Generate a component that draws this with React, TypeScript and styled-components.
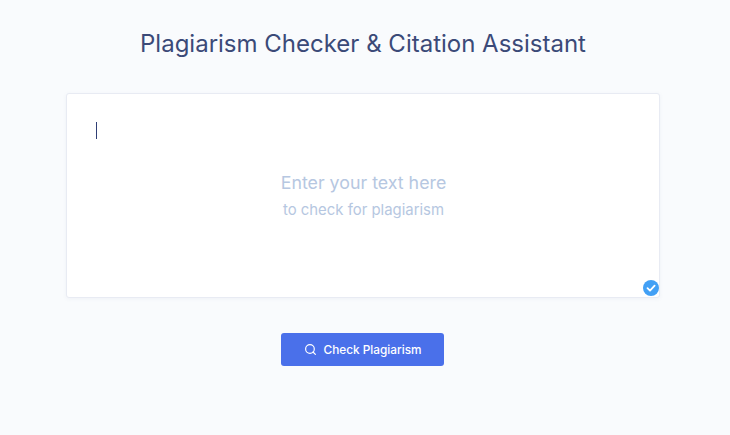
import styled, { createGlobalStyle } from 'styled-components';
import { Search } from 'lucide-react';

const GlobalStyle = createGlobalStyle`
  html, body {
    margin: 0;
    padding: 0;
    background: #f9fbfd;
  }
`;

const App = () => {
  return (
    <Page>
      <GlobalStyle />
      <Heading>Plagiarism Checker &amp; Citation Assistant</Heading>
      <EditorCard>
        <Caret />
        <Placeholder>
          <PlaceholderTitle>Enter your text here</PlaceholderTitle>
          <PlaceholderSub>to check for plagiarism</PlaceholderSub>
        </Placeholder>
        <StatusBadge>
          <svg width="10" height="10" viewBox="0 0 10 10" fill="none">
            <path d="M1.5 5.2 L4 7.6 L8.6 2.6" stroke="#fff" strokeWidth="1.8" strokeLinecap="round" strokeLinejoin="round" />
          </svg>
        </StatusBadge>
      </EditorCard>
      <CheckButton>
        <Search size={13} strokeWidth={2.2} />
        Check Plagiarism
      </CheckButton>
    </Page>
  );
};

export default App;

const Page = styled.div`
  width: 726px;
  height: 435px;
  box-sizing: border-box;
  padding-top: 27px;
  display: flex;
  flex-direction: column;
  align-items: center;
  background: #f9fbfd;
  font-family: Inter, 'Liberation Sans', sans-serif;
`;

const Heading = styled.h1`
  margin: 0 0 33px;
  height: 33px;
  line-height: 33px;
  font-size: 24px;
  font-weight: 400;
  color: #3b4a78;
`;

const EditorCard = styled.div`
  position: relative;
  width: 594px;
  height: 205px;
  box-sizing: border-box;
  padding: 28px 29px 0;
  background: #fff;
  border: 1px solid #e8ebf3;
  border-radius: 3px;
  box-shadow: 0 1px 4px rgba(60, 80, 140, 0.06);
  display: flex;
  flex-direction: column;
`;

const Caret = styled.div`
  width: 1px;
  height: 17px;
  background: #2f3e75;
`;

const Placeholder = styled.div`
  margin-top: 32px;
  padding-left: 1px;
  display: flex;
  flex-direction: column;
  align-items: center;
  gap: 5px;
  color: #b6c7e1;
`;

const PlaceholderTitle = styled.div`
  font-size: 17.8px;
  line-height: 24px;
`;

const PlaceholderSub = styled.div`
  font-size: 14.9px;
  line-height: 20px;
`;

const StatusBadge = styled.span`
  position: absolute;
  right: 0;
  bottom: 1px;
  width: 16px;
  height: 16px;
  border-radius: 50%;
  background: #42a0f5;
  display: flex;
  align-items: center;
  justify-content: center;
`;

const CheckButton = styled.button`
  margin-top: 35px;
  margin-right: 1px;
  width: 163px;
  height: 33px;
  border: none;
  border-radius: 3px;
  background: #4a70ea;
  color: #fff;
  display: flex;
  align-items: center;
  justify-content: center;
  gap: 7px;
  font-family: Inter, 'Liberation Sans', sans-serif;
  font-size: 11.8px;
  font-weight: 500;
`;
